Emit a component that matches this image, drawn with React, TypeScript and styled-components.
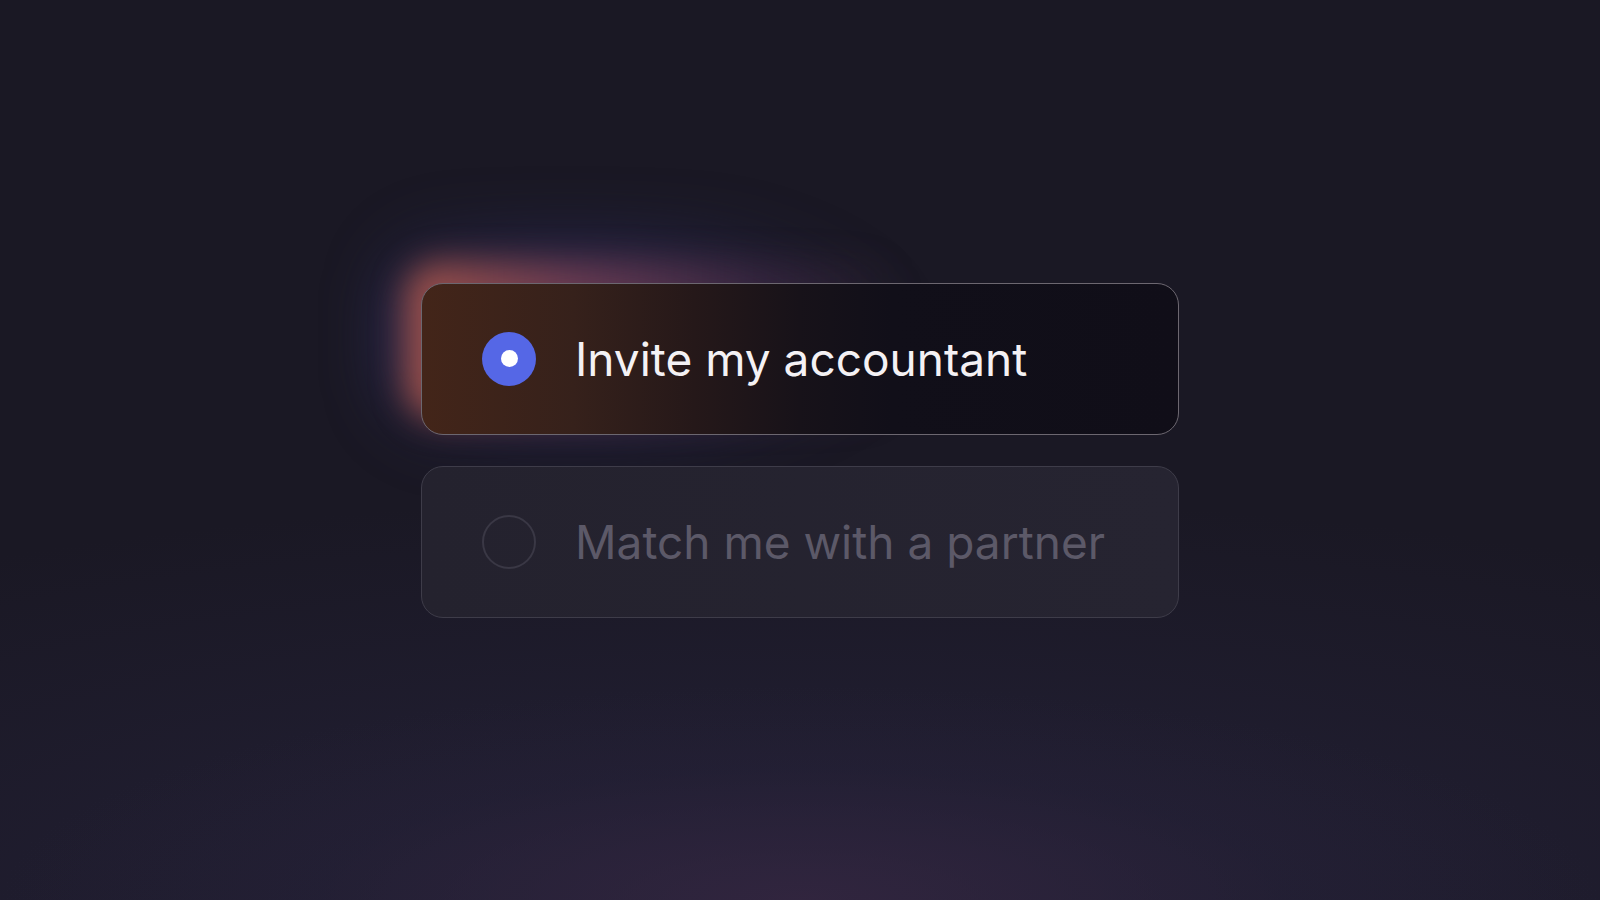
import styled, { createGlobalStyle } from "styled-components";
import { FC } from "react";

interface OptionProps {
  label: string;
  selected?: boolean;
}

const Option: FC<OptionProps> = ({ label, selected = false }) => (
  <Slot>
    {selected && (
      <>
        <Halo />
        <Glow />
      </>
    )}
    <Card $selected={selected}>
      <Radio $selected={selected}>{selected && <Dot />}</Radio>
      <Label $selected={selected}>{label}</Label>
    </Card>
  </Slot>
);

const App: FC = () => (
  <>
    <GlobalStyle />
    <Page>
      <Options>
        <Option label="Invite my accountant" selected />
        <Option label="Match me with a partner" />
      </Options>
    </Page>
  </>
);

export default App;

// styled components

const GlobalStyle = createGlobalStyle`
  html, body {
    margin: 0;
    padding: 0;
    background: #1a1824;
  }
`;

const Page = styled.main`
  width: 100vw;
  height: 100vh;
  display: flex;
  align-items: center;
  justify-content: center;
  overflow: hidden;
  font-family: Inter, "Noto Sans", sans-serif;
  background:
    radial-gradient(ellipse 50% 24% at 50% 100%, rgba(52, 38, 64, 0.8), rgba(40, 34, 58, 0.3) 60%, transparent 100%),
    radial-gradient(ellipse 95% 45% at 50% 100%, rgba(36, 33, 56, 0.95), transparent 100%),
    #1a1824;
`;

const Options = styled.div`
  display: flex;
  flex-direction: column;
  gap: 31px;
`;

const Slot = styled.div`
  position: relative;
  isolation: isolate;
`;

const Halo = styled.div`
  position: absolute;
  left: -50px;
  top: -68px;
  width: 560px;
  height: 240px;
  border-radius: 80px;
  background: radial-gradient(ellipse 62% 58% at 35% 50%, rgba(64, 60, 128, 0.7), rgba(44, 42, 90, 0.3) 70%, transparent 100%);
  filter: blur(24px);
  z-index: 0;
`;

const Glow = styled.div`
  position: absolute;
  left: -16px;
  top: -22px;
  width: 500px;
  height: 160px;
  border-radius: 36px;
  background: linear-gradient(90deg, rgba(186, 92, 76, 0.8) 0%, rgba(150, 72, 84, 0.55) 35%, rgba(104, 54, 80, 0.28) 70%, transparent 100%);
  filter: blur(16px);
  z-index: 0;
`;

const Card = styled.div<{ $selected: boolean }>`
  position: relative;
  z-index: 1;
  width: 758px;
  height: 152px;
  box-sizing: border-box;
  display: flex;
  align-items: center;
  gap: 39px;
  padding-left: 60px;
  border-radius: 22px;
  border: 1.5px solid ${(p) => (p.$selected ? "#6c6770" : "#3e3c49")};
  background: ${(p) =>
    p.$selected
      ? "linear-gradient(90deg, #432519 0%, #36211b 20%, #251819 36%, #171219 50%, #110f19 62%, #100e18 100%)"
      : "linear-gradient(90deg, #24222e 0%, #262431 100%)"};
`;

const Radio = styled.span<{ $selected: boolean }>`
  flex: none;
  width: 54px;
  height: 54px;
  box-sizing: border-box;
  border-radius: 50%;
  display: flex;
  align-items: center;
  justify-content: center;
  background: ${(p) => (p.$selected ? "#5567e6" : "transparent")};
  border: ${(p) => (p.$selected ? "none" : "2.5px solid #3a3845")};
`;

const Dot = styled.span`
  width: 17px;
  height: 17px;
  border-radius: 50%;
  background: #ffffff;
`;

const Label = styled.span<{ $selected: boolean }>`
  font-size: 46px;
  font-weight: 400;
  color: ${(p) => (p.$selected ? "#f4f1f4" : "#5c5968")};
  white-space: nowrap;
`;
